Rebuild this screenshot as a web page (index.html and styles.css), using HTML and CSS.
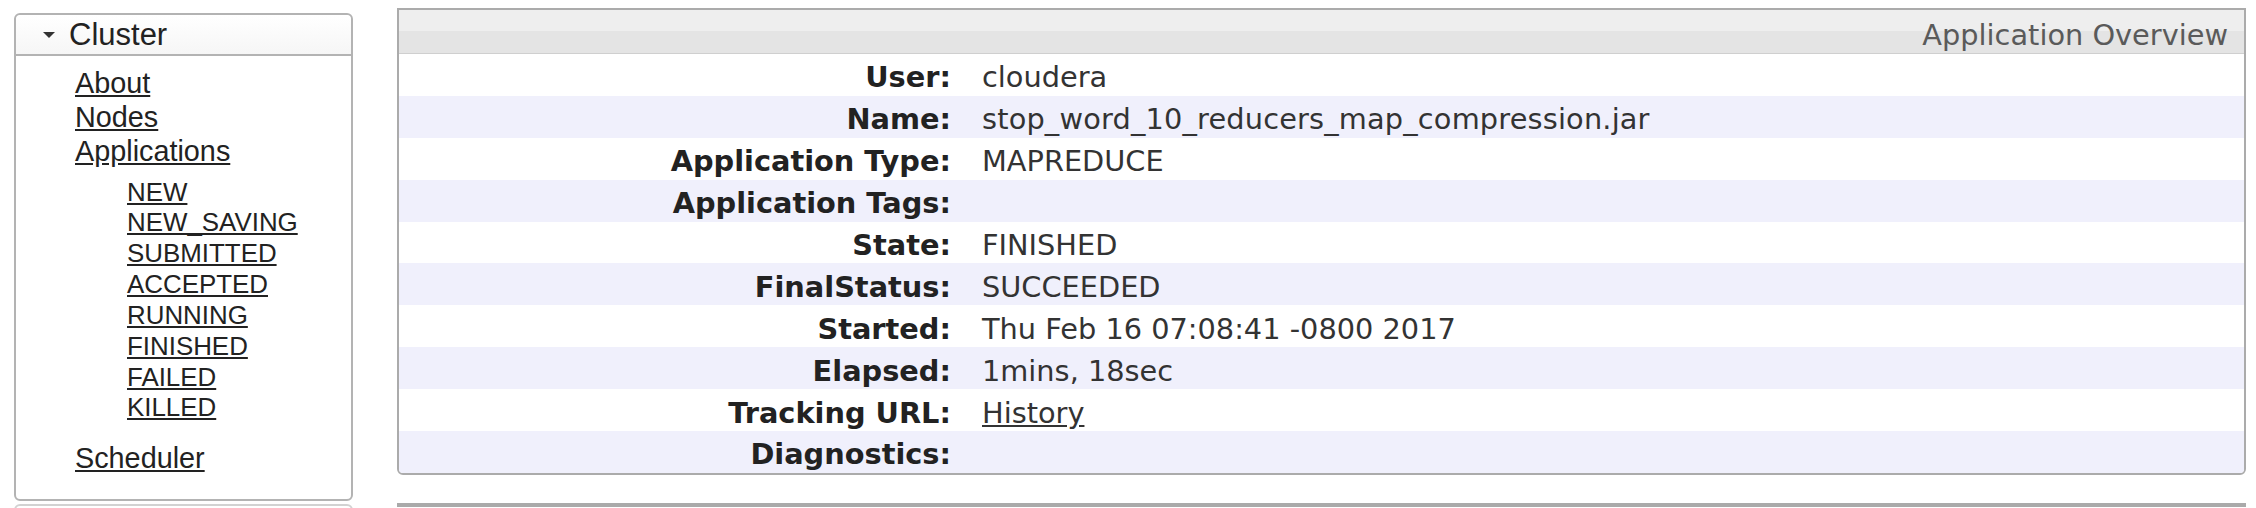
FILE: index.html
```html
<!DOCTYPE html>
<html>
<head>
<meta charset="utf-8">
<link rel="stylesheet" href="styles.css">
</head>
<body>
<div class="layout">
  <nav class="sidebar">
    <div class="acc">
      <h3 class="acc-head"><svg class="tri" width="12" height="6" viewBox="0 0 12 6"><polygon points="0,0 12,0 6,6" fill="#333"/></svg>Cluster</h3>
      <div class="acc-body">
        <ul class="nav">
          <li><a href="#">About</a></li>
          <li><a href="#">Nodes</a></li>
          <li><a href="#">Applications</a>
            <ul class="sub">
              <li><a href="#">NEW</a></li>
              <li><a href="#">NEW_SAVING</a></li>
              <li><a href="#">SUBMITTED</a></li>
              <li><a href="#">ACCEPTED</a></li>
              <li><a href="#">RUNNING</a></li>
              <li><a href="#">FINISHED</a></li>
              <li><a href="#">FAILED</a></li>
              <li><a href="#">KILLED</a></li>
            </ul>
          </li>
          <li><a href="#">Scheduler</a></li>
        </ul>
      </div>
    </div>
    <div class="acc-next"></div>
  </nav>
  <main class="content">
    <div class="info">
      <div class="info-head">Application Overview</div>
      <table class="info-table">
        <tr><th>User:</th><td>cloudera</td></tr>
        <tr><th>Name:</th><td class="wide">stop_word_10_reducers_map_compression.jar</td></tr>
        <tr><th>Application Type:</th><td>MAPREDUCE</td></tr>
        <tr><th>Application Tags:</th><td></td></tr>
        <tr><th>State:</th><td>FINISHED</td></tr>
        <tr><th>FinalStatus:</th><td>SUCCEEDED</td></tr>
        <tr><th>Started:</th><td>Thu Feb 16 07:08:41 -0800 2017</td></tr>
        <tr><th>Elapsed:</th><td>1mins, 18sec</td></tr>
        <tr><th>Tracking URL:</th><td><a href="#">History</a></td></tr>
        <tr><th>Diagnostics:</th><td></td></tr>
      </table>
    </div>
    <div class="info-next"></div>
  </main>
</div>
</body>
</html>
```
FILE: styles.css
```css
html, body {
  margin: 0;
  padding: 0;
  overflow: hidden;
  background: #fff;
}
.layout {
  display: flex;
  align-items: flex-start;
  padding: 8px 10px 0 14px;
  gap: 44px;
}
.sidebar {
  width: 339px;
  flex: none;
  margin-top: 5px;
  font-family: "Liberation Sans", Arial, sans-serif;
  color: #222;
}
.acc {
  border: 2px solid #b3b3b3;
  border-radius: 6px;
  background: #fff;
}
.acc-head {
  margin: 0;
  height: 39px;
  line-height: 39px;
  font-size: 31px;
  font-weight: normal;
  color: #222;
  padding-left: 53px;
  position: relative;
  background: linear-gradient(#ffffff, #f6f6f6);
  border-bottom: 2px solid #b3b3b3;
  border-radius: 5px 5px 0 0;
}
.tri {
  position: absolute;
  left: 27px;
  top: 17px;
}
.acc-body {
  padding: 10px 0 23px 59px;
  height: 410px;
}
.nav, .sub {
  list-style: none;
  margin: 0;
  padding: 0;
}
.nav > li {
  font-size: 28.8px;
  line-height: 34px;
}
.nav a {
  color: #222;
  text-decoration: underline;
}
.sub {
  padding-left: 52px;
  margin: 8.5px 0 18px;
}
.sub li {
  font-size: 25.9px;
  line-height: 30.85px;
}
.acc-next {
  margin-top: 3px;
  height: 40px;
  border: 2px solid #d2d2d2;
  border-radius: 6px;
}
.content {
  flex: 1;
  min-width: 0;
  font-family: "DejaVu Sans", Verdana, sans-serif;
}
.info {
  border: 2px solid #ababab;
  border-radius: 0 0 6px 6px;
  background: #fff;
  overflow: hidden;
}
.info-head {
  height: 37px;
  line-height: 38px;
  padding: 6px 16px 0 0;
  text-align: right;
  font-size: 28.8px;
  color: #5a5a5a;
  background: linear-gradient(#eeeeee 50%, #e4e4e4 50%);
  border-bottom: 1px solid #cfcfcf;
}
.info-table {
  width: 100%;
  border-collapse: collapse;
  font-size: 28.8px;
}
.info-table tr {
  height: 41.9px;
}
.info-table tr:nth-child(even) {
  background: #f0f0fc;
}
.info-table th {
  width: 552px;
  text-align: right;
  font-weight: bold;
  color: #222;
  padding: 5px 0 0 0;
  white-space: nowrap;
}
.info-table td {
  padding: 5px 0 0 31px;
  color: #333;
}
.info-table td.wide {
  letter-spacing: 0.17px;
}
.info-table a {
  color: #333;
  text-decoration: underline;
}
.info-next {
  margin-top: 28px;
  height: 40px;
  border-top: 4px solid #aaaaaa;
}
```
